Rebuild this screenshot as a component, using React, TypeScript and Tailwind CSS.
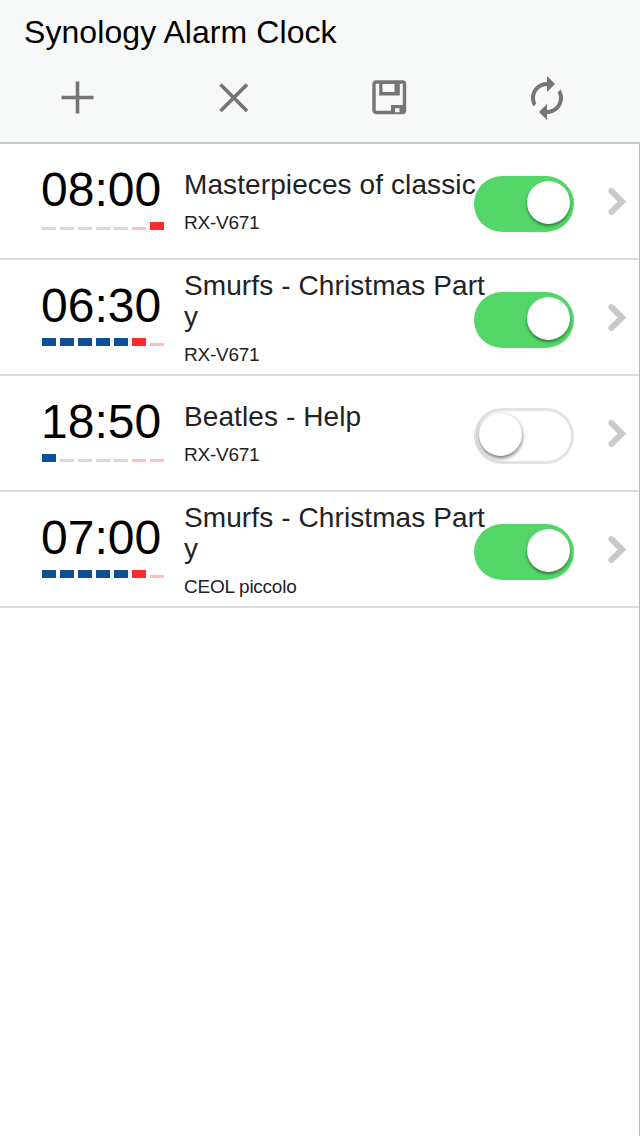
type Alarm = {
  time: string;
  title: string;
  device: string;
  days: boolean[];
  on: boolean;
};

const week = (s: string) => s.split("").map((c) => c === "1");

const alarms: Alarm[] = [
  { time: "08:00", title: "Masterpieces of classic", device: "RX-V671", days: week("0000001"), on: true },
  { time: "06:30", title: "Smurfs - Christmas Party", device: "RX-V671", days: week("1111110"), on: true },
  { time: "18:50", title: "Beatles - Help", device: "RX-V671", days: week("1000000"), on: false },
  { time: "07:00", title: "Smurfs - Christmas Party", device: "CEOL piccolo", days: week("1111110"), on: true },
];

function dayClass(index: number, active: boolean) {
  const weekend = index > 4;
  if (active) return weekend ? "h-2 bg-[#fb2a2b]" : "h-2 bg-[#0d4f94]";
  return weekend ? "h-[3px] bg-[#fbbfc0]" : "h-[3px] bg-[#d8d8d8]";
}

function Toggle({ on }: { on: boolean }) {
  return (
    <button
      type="button"
      role="switch"
      aria-checked={on}
      className={
        on
          ? "relative mt-8 h-14 w-[100px] shrink-0 rounded-full bg-[#53d769]"
          : "relative mt-8 h-14 w-[100px] shrink-0 rounded-full border-[3px] border-[#e3e3e3] bg-white"
      }
    >
      <span
        className={
          on
            ? "absolute top-[5px] left-[53px] size-[43px] rounded-full bg-white shadow-[0_2px_3px_rgba(0,0,0,0.45)]"
            : "absolute top-[2px] left-[2px] size-[43px] rounded-full bg-white shadow-[0_2px_4px_rgba(0,0,0,0.6)]"
        }
      />
    </button>
  );
}

function AlarmRow({ alarm }: { alarm: Alarm }) {
  return (
    <li className="flex h-[116px] border-b-2 border-[#dedede] pl-[41px]">
      <div className="w-[143px] shrink-0 pt-[19px]">
        <div className="h-[54px] text-[48px] leading-[54px] text-black">{alarm.time}</div>
        <div className="mt-[5px] ml-px flex h-2 items-end gap-1">
          {alarm.days.map((active, i) => (
            <span key={i} className={`w-[14px] ${dayClass(i, active)}`} />
          ))}
        </div>
      </div>
      <div className="-mr-[13px] flex w-[303px] shrink-0 flex-col justify-center pt-[5px]">
        <div className="text-[28px] leading-[31px] tracking-[0.1px] break-all text-[#222]">{alarm.title}</div>
        <div className="pt-2 text-[19px] leading-[30px] tracking-[-0.25px] text-[#222]">{alarm.device}</div>
      </div>
      <Toggle on={alarm.on} />
      <svg className="mt-[43px] ml-[34px] shrink-0" width="19" height="29" viewBox="0 0 19 29" fill="none">
        <path d="M3.4 4L14 14.5L3.4 25" stroke="#c9c9c9" strokeWidth="6" strokeLinecap="round" />
      </svg>
    </li>
  );
}

const toolClass = "flex h-14 w-[156.5px] items-center justify-center";

export default function App() {
  return (
    <main className="flex h-[1136px] w-[640px] flex-col overflow-hidden bg-white font-['Liberation_Sans',Arial,sans-serif]">
      <header className="h-36 shrink-0 border-b-2 border-[#c8caca] bg-[#f7f9f9]">
        <h1 className="h-[70px] pl-6 text-[32px] leading-[64px] tracking-[0.07px] text-black">Synology Alarm Clock</h1>
        <nav className="-ml-px flex">
          <button type="button" aria-label="Add" className={toolClass}>
            <svg width="36" height="36" viewBox="0 0 36 36" stroke="#757575" strokeWidth="3.6">
              <path d="M2.5 17.5H34.5M18.5 1.5V33.5" />
            </svg>
          </button>
          <button type="button" aria-label="Delete" className={toolClass}>
            <svg width="36" height="36" viewBox="0 0 36 36" stroke="#757575" strokeWidth="3.8">
              <path d="M4.5 4.5L31 31M31 4.5L4.5 31" />
            </svg>
          </button>
          <button type="button" aria-label="Save" className={toolClass}>
            <svg width="36" height="36" viewBox="0 0 36 36" fill="#757575">
              <rect x="2" y="2" width="30.5" height="30.5" rx="2" fill="none" stroke="#757575" strokeWidth="3.4" />
              <path fillRule="evenodd" d="M7.2 2H27.8V15.5H7.2ZM10.5 4V12H22.5V4Z" />
              <path d="M19 25H31V34H19Z" />
              <path d="M23 28.2H27.5V32.2H23Z" fill="#f7f9f9" />
            </svg>
          </button>
          <button type="button" aria-label="Refresh" className={toolClass}>
            <svg width="48" height="48" viewBox="0 0 24 24" fill="#757575">
              <path d="M12 6v3l4-4-4-4v3c-4.42 0-8 3.58-8 8 0 1.57.46 3.03 1.24 4.26L6.7 14.8c-.45-.83-.7-1.79-.7-2.8 0-3.31 2.69-6 6-6zm6.76 1.74L17.3 9.2c.44.84.7 1.79.7 2.8 0 3.31-2.69 6-6 6v-3l-4 4 4 4v-3c4.42 0 8-3.58 8-8 0-1.57-.46-3.03-1.24-4.26z" />
            </svg>
          </button>
        </nav>
      </header>
      <ul className="flex-1 border-r border-[#b9bcbc]">
        {alarms.map((alarm, i) => (
          <AlarmRow key={i} alarm={alarm} />
        ))}
      </ul>
    </main>
  );
}
